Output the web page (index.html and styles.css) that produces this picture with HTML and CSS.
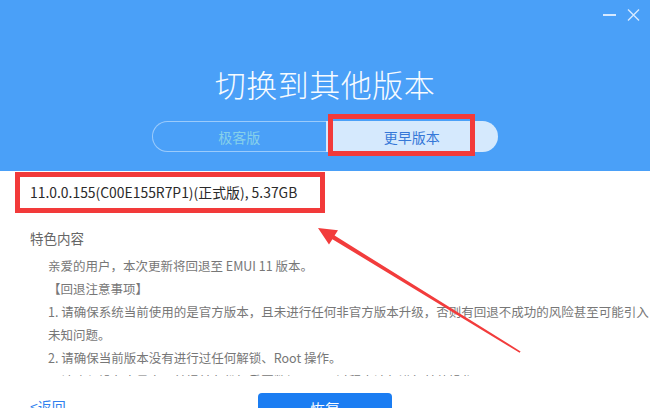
FILE: index.html
```html
<!DOCTYPE html>
<html lang="zh-CN">
<head>
<meta charset="utf-8">
<title>切换到其他版本</title>
<link rel="stylesheet" href="styles.css">
</head>
<body>
<div class="app">
  <header class="head">
    <div class="winbar">
      <span class="win-min"></span>
      <svg class="win-close" width="13" height="12" viewBox="0 0 13 12"><path d="M1 0.5 L12 11.5 M12 0.5 L1 11.5" stroke="#d6e9ff" stroke-width="1.4" fill="none"/></svg>
    </div>
    <h1 class="title">切换到其他版本</h1>
    <div class="seg">
      <div class="seg-item">极客版</div>
      <div class="seg-item seg-on">更早版本</div>
    </div>
    <div class="mark mark-tab"></div>
  </header>

  <main class="body">
    <div class="version">11.0.0.155(C00E155R7P1)(正式版), 5.37GB</div>
    <div class="feat-title">特色内容</div>
    <div class="scroll">
      <div class="notes">
        <div class="line">亲爱的用户，本次更新将回退至 EMUI 11 版本。</div>
        <div class="line">【回退注意事项】</div>
        <div class="line">1. 请确保系统当前使用的是官方版本，且未进行任何非官方版本升级，否则有回退不成功的风险甚至可能引入</div>
        <div class="line">未知问题。</div>
        <div class="line">2. 请确保当前版本没有进行过任何解锁、Root 操作。</div>
        <div class="line">3. 请确保设备电量充足并提前备份好重要数据，回退过程中请勿进行其他操作。</div>
      </div>
      <div class="track"><div class="thumb"></div></div>
    </div>
    <footer class="foot">
      <a class="back">&lt;返回</a>
      <button class="btn">恢复</button>
      <span></span>
    </footer>
  </main>

  <svg class="arrow" width="650" height="408" viewBox="0 0 650 408">
    <polygon points="318,228 338,230.2 334.6,235.6 520.6,351.4 519.6,352.8 332.4,239.2 329,244.6" fill="#f23c3c"/>
  </svg>
</div>
</body>
</html>
```

FILE: styles.css
```css
* { box-sizing: border-box; }
html, body { margin: 0; padding: 0; }
body {
  width: 650px;
  height: 408px;
  overflow: hidden;
  background: #ffffff;
  font-family: "Noto Sans CJK SC", "Noto Sans", sans-serif;
}
.app {
  position: relative;
  width: 650px;
  height: 408px;
  overflow: hidden;
}
.head {
  position: relative;
  height: 171px;
  background: #4aa0f8;
}
.winbar {
  height: 30px;
  display: flex;
  justify-content: flex-end;
  align-items: center;
  gap: 11px;
  padding-right: 10px;
}
.win-min {
  width: 13px;
  height: 1.5px;
  background: #d6e9ff;
}
.win-close { display: block; }
.title {
  margin: 34px 0 0;
  height: 40px;
  line-height: 40px;
  text-align: center;
  font-size: 31px;
  font-weight: 300;
  color: #f7fbff;
  letter-spacing: 0.5px;
}
.seg {
  margin: 17px auto 0;
  width: 346px;
  height: 31px;
  display: flex;
}
.seg-item {
  flex: 1;
  display: flex;
  align-items: center;
  justify-content: center;
  font-size: 14px;
  color: #86d0ea;
  border: 1px solid rgba(255, 255, 255, 0.45);
  border-right: none;
  border-radius: 16px 0 0 16px;
}
.seg-on {
  border: none;
  background: #d5e9fd;
  color: #3578d8;
  border-radius: 0 16px 16px 0;
}
.mark {
  position: absolute;
  border: 5px solid #f23a3a;
}
.mark-tab {
  left: 328px;
  top: 114px;
  width: 147px;
  height: 42px;
}
.body {
  display: flex;
  flex-direction: column;
}
.version {
  margin: 1px 0 0 15px;
  width: 310px;
  height: 41px;
  border: 5px solid #f23a3a;
  padding-left: 10px;
  line-height: 31px;
  font-size: 13.9px;
  color: #2a2a2a;
  white-space: nowrap;
}
.feat-title {
  margin-top: 15px;
  padding-left: 30px;
  height: 20px;
  line-height: 20px;
  font-size: 13.5px;
  color: #666666;
}
.scroll {
  margin-top: 2px;
  height: 126px;
  overflow: hidden;
  display: flex;
}
.notes {
  flex: 1;
  padding: 4px 0 0 48px;
}
.line {
  height: 23px;
  line-height: 23px;
  font-size: 12.5px;
  color: #777777;
  white-space: nowrap;
}
.track {
  width: 6px;
  margin-right: 24px;
}
.thumb {
  margin-top: 4px;
  height: 71px;
  border-radius: 3px;
  background: #e2e2e2;
}
.foot {
  height: 65px;
  display: grid;
  grid-template-columns: 1fr 134px 1fr;
  align-items: center;
}
.back {
  padding-left: 30px;
  font-size: 14px;
  color: #2f80ee;
  margin-top: -5px;
}
.btn {
  width: 134px;
  height: 32px;
  border: none;
  border-radius: 4px;
  background: #1b7df2;
  color: #ffffff;
  font-family: "Noto Sans CJK SC", sans-serif;
  font-size: 15px;
  padding: 0;
}
.arrow {
  position: absolute;
  left: 0;
  top: 0;
  pointer-events: none;
}
```
